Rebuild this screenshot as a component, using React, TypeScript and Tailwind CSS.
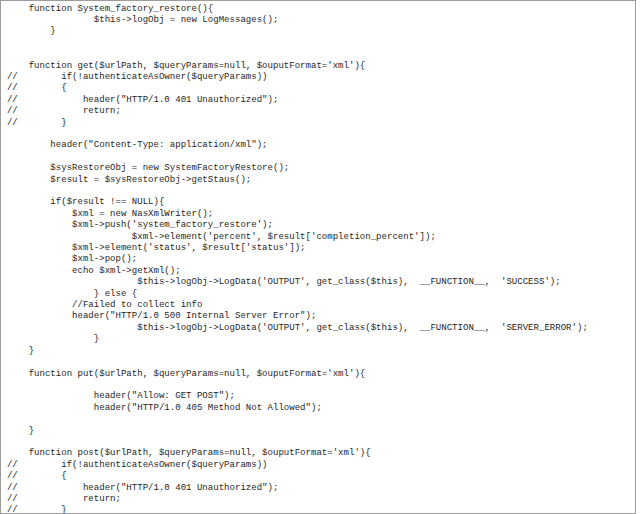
import React from 'react';

// One line of the listing: column to start at, the code, and whether it is
// commented out with a "//" in the gutter.
interface CodeLine {
  col: number;
  text: string;
  commented?: boolean;
}

const L = (col: number, text: string, commented = false): CodeLine => ({ col, text, commented });
const BLANK: CodeLine = { col: 0, text: '' };

const authCheck: CodeLine[] = [
  L(11, 'if(!authenticateAsOwner($queryParams))', true),
  L(11, '{', true),
  L(15, 'header("HTTP/1.0 401 Unauthorized");', true),
  L(15, 'return;', true),
  L(11, '}', true),
];

const lines: CodeLine[] = [
  L(5, 'function System_factory_restore(){'),
  L(17, '$this->logObj = new LogMessages();'),
  L(9, '}'),
  BLANK,
  BLANK,
  L(5, "function get($urlPath, $queryParams=null, $ouputFormat='xml'){"),
  ...authCheck,
  BLANK,
  L(9, 'header("Content-Type: application/xml");'),
  BLANK,
  L(9, '$sysRestoreObj = new SystemFactoryRestore();'),
  L(9, '$result = $sysRestoreObj->getStaus();'),
  BLANK,
  L(9, 'if($result !== NULL){'),
  L(13, '$xml = new NasXmlWriter();'),
  L(13, "$xml->push('system_factory_restore');"),
  L(24, "$xml->element('percent', $result['completion_percent']);"),
  L(13, "$xml->element('status', $result['status']);"),
  L(13, '$xml->pop();'),
  L(13, 'echo $xml->getXml();'),
  L(25, "$this->logObj->LogData('OUTPUT', get_class($this),  __FUNCTION__,  'SUCCESS');"),
  L(17, '} else {'),
  L(13, '//Failed to collect info'),
  L(13, 'header("HTTP/1.0 500 Internal Server Error");'),
  L(25, "$this->logObj->LogData('OUTPUT', get_class($this),  __FUNCTION__,  'SERVER_ERROR');"),
  L(17, '}'),
  L(5, '}'),
  BLANK,
  L(5, "function put($urlPath, $queryParams=null, $ouputFormat='xml'){"),
  BLANK,
  L(17, 'header("Allow: GET POST");'),
  L(17, 'header("HTTP/1.0 405 Method Not Allowed");'),
  BLANK,
  L(5, '}'),
  BLANK,
  L(5, "function post($urlPath, $queryParams=null, $ouputFormat='xml'){"),
  ...authCheck,
];

// Builds the padded string so the code lands on its column.
const renderLine = (line: CodeLine) => {
  if (!line.text) return ' ';
  if (line.commented) return ' //' + ' '.repeat(Math.max(0, line.col - 3)) + line.text;
  return ' '.repeat(line.col) + line.text;
};

export default function App() {
  return (
    <div className="w-[640px] h-[514px] bg-white overflow-hidden">
      <div className="w-[636px] h-[514px] border border-[#9c9c9c] overflow-hidden pt-[1.5px] pl-[0.5px]">
        {lines.map((line, i) => (
          <div
            key={i}
            className="whitespace-pre text-[9.05px] leading-[11.41px] h-[11.41px] text-[#262626] font-['Liberation_Mono',monospace]"
          >
            {renderLine(line)}
          </div>
        ))}
      </div>
    </div>
  );
}
